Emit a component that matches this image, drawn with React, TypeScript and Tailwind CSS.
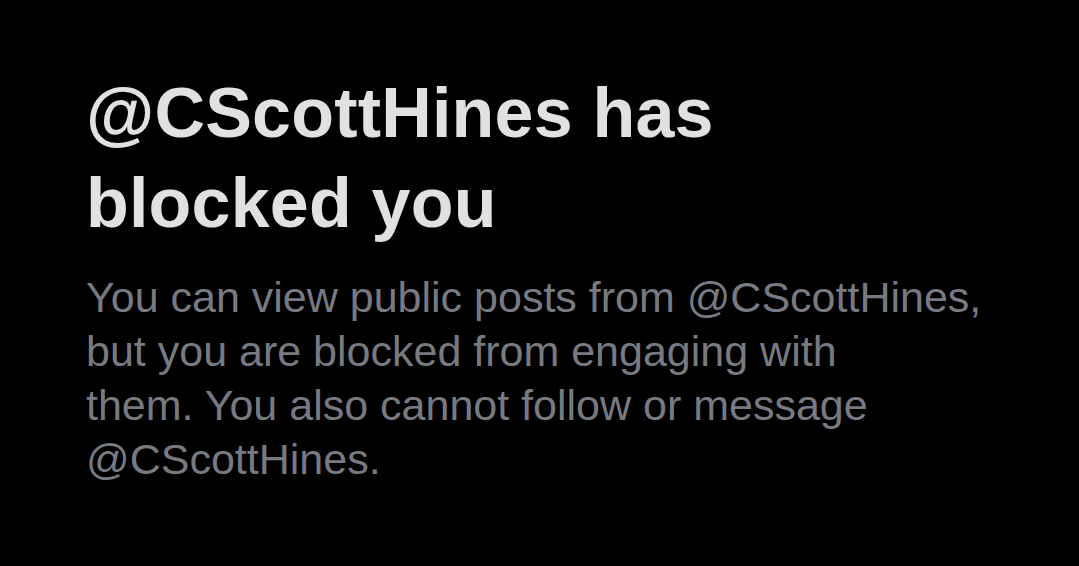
export default function App() {
  return (
    <div className="w-[1079px] h-[566px] bg-black overflow-hidden pl-[86px] pt-[68px] font-['Liberation_Sans',Arial,sans-serif]">
      <h1 className="text-[70px] leading-[90px] font-bold text-[#e1e1e1] tracking-[0.2px]">
        @CScottHines has
        <br />
        blocked you
      </h1>
      <p className="mt-[22px] text-[43px] leading-[54px] text-[#777a80]">
        You can view public posts from @CScottHines,
        <br />
        but you are blocked from engaging with
        <br />
        them. You also cannot follow or message
        <br />
        @CScottHines.
      </p>
    </div>
  );
}
